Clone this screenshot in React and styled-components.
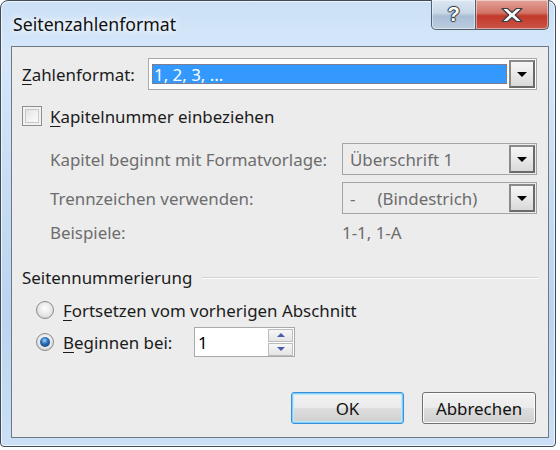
import React from 'react';
import styled, { createGlobalStyle } from 'styled-components';

const GlobalStyle = createGlobalStyle`
  body {
    margin: 0;
    background: #ffffff;
    font-family: "Noto Sans", "DejaVu Sans", sans-serif;
  }
`;

const Frame = styled.div`
  box-sizing: border-box;
  width: 556px;
  height: 447px;
  border: 1px solid #3e4b58;
  border-radius: 8px 8px 4px 4px;
  background: linear-gradient(180deg, #cbe0f6 0%, #d6e8fa 12%, #c8ddf4 40%, #bcd4ef 70%, #cbe0f6 100%);
  box-shadow: inset 0 0 0 1px rgba(255, 255, 255, 0.7);
  display: flex;
  flex-direction: column;
  padding: 0 6px 8px 10px;
`;

const TitleBar = styled.div`
  height: 45px;
  display: flex;
  align-items: flex-start;
  justify-content: space-between;
`;

const Title = styled.div`
  font-size: 17.7px;
  color: #111;
  padding: 11px 0 0 2px;
  text-shadow: 0 0 6px #ffffff, 0 0 10px #ffffff;
`;

const Caption = styled.div`
  display: flex;
  margin-top: -1px;
`;

const CaptionButton = styled.div`
  width: ${(p) => p.$w}px;
  height: 30px;
  box-sizing: border-box;
  border: 1px solid #54606c;
  border-top: none;
  border-radius: ${(p) => (p.$close ? '0 0 5px 0' : '0 0 0 5px')};
  border-left: ${(p) => (p.$close ? 'none' : '1px solid #54606c')};
  background: ${(p) =>
    p.$close
      ? 'linear-gradient(180deg, #e2a298 0%, #d27265 45%, #c2392a 55%, #cb5446 100%)'
      : 'linear-gradient(180deg, #dbe6f2 0%, #c9d7e6 45%, #a9bed6 55%, #bccde0 100%)'};
  box-shadow: inset 0 0 0 1px rgba(255, 255, 255, 0.45);
  display: flex;
  align-items: center;
  justify-content: center;
  color: #ffffff;
  font-family: "Liberation Sans", sans-serif;
  font-weight: bold;
  font-size: 20px;
  text-shadow: 0 0 1px #2d3640, 1px 0 1px #2d3640, -1px 0 1px #2d3640, 0 1px 1px #2d3640, 0 -1px 1px #2d3640;
`;

const Client = styled.div`
  flex: 1;
  border: 1px solid #6c7a88;
  background: #ececec;
  padding: 11px 10px 0 10px;
  display: flex;
  flex-direction: column;
  font-size: 16.9px;
  color: #1b1b1b;
`;

const Row = styled.div`
  display: flex;
  align-items: center;
  height: ${(p) => p.$h}px;
  margin-top: ${(p) => p.$mt || 0}px;
  padding-left: ${(p) => p.$indent || 0}px;
  gap: ${(p) => p.$gap || 0}px;
`;

const Label = styled.span`
  width: ${(p) => (p.$w ? `${p.$w}px` : 'auto')};
  flex-shrink: 0;
  color: ${(p) => (p.$disabled ? '#6d6d6d' : '#1b1b1b')};
  white-space: nowrap;
`;

const Key = styled.span`
  text-decoration: underline;
  text-underline-offset: 3px;
`;

const SelectBox = styled.div`
  box-sizing: border-box;
  width: ${(p) => p.$w}px;
  height: 32px;
  border: 1px solid ${(p) => (p.$disabled ? '#a4a4a4' : '#a9a9a9')};
  background: ${(p) => (p.$disabled ? '#ececec' : '#ffffff')};
  display: flex;
  align-items: center;
  padding: 0 1px 0 3px;
  gap: 2px;
`;

const Field = styled.div`
  flex: 1;
  height: 20px;
  display: flex;
  align-items: center;
  padding-left: ${(p) => (p.$selected ? 2 : 4)}px;
  color: ${(p) => (p.$selected ? '#ffffff' : '#6d6d6d')};
  background: ${(p) => (p.$selected ? '#3399ff' : 'transparent')};
  outline: ${(p) => (p.$selected ? '1px dotted #c8642a' : 'none')};
  outline-offset: -1px;
  white-space: pre;
`;

const DropButton = styled.div`
  box-sizing: border-box;
  width: 26px;
  height: 28px;
  border: 2px solid #6a6a6a;
  border-top-color: #8a8a8a;
  border-left-color: #8a8a8a;
  background: linear-gradient(180deg, #f6f6f6 0%, #e9e9e9 50%, #d9d9d9 100%);
  display: flex;
  align-items: center;
  justify-content: center;

  &::after {
    content: '';
    border-left: 5px solid transparent;
    border-right: 5px solid transparent;
    border-top: 5px solid #000;
    margin-top: 1px;
  }
`;

const CheckBox = styled.div`
  box-sizing: border-box;
  width: 20px;
  height: 20px;
  border: 1px solid #8e8f8f;
  background: linear-gradient(135deg, #dcdcdc 0%, #f4f4f4 60%, #ffffff 100%);
  box-shadow: inset 0 0 0 2px #f2f2f2, inset 0 0 0 3px #c8c8c8;
  flex-shrink: 0;
`;

const Radio = styled.div`
  box-sizing: border-box;
  width: 18px;
  height: 18px;
  border-radius: 50%;
  border: 1px solid #8a8a8a;
  background: radial-gradient(circle at 50% 40%, #ffffff 0%, #e6e6e6 55%, #c9c9c9 100%);
  display: flex;
  align-items: center;
  justify-content: center;
  flex-shrink: 0;

  &::after {
    content: '';
    display: ${(p) => (p.$checked ? 'block' : 'none')};
    width: 10px;
    height: 10px;
    border-radius: 50%;
    background: radial-gradient(circle at 45% 35%, #9ad6ff 0%, #2a6fb8 40%, #0d2f5c 100%);
  }
`;

const GroupLine = styled.div`
  flex: 1;
  height: 1px;
  margin: 0 0 0 10px;
  background: #d3d3d3;
  box-shadow: 0 1px 0 #ffffff;
`;

const Spin = styled.div`
  box-sizing: border-box;
  width: 101px;
  height: 30px;
  border: 1px solid #a9a9a9;
  background: #ffffff;
  display: flex;
  align-items: center;
  padding: 0 1px 0 3px;
`;

const SpinValue = styled.div`
  flex: 1;
  color: #000;
`;

const SpinButtons = styled.div`
  display: flex;
  flex-direction: column;
  gap: 1px;
`;

const SpinArrow = styled.div`
  box-sizing: border-box;
  width: 25px;
  height: 13px;
  border: 1px solid #bcbcbc;
  background: linear-gradient(180deg, #f7f7f7 0%, #e4e4e4 100%);
  display: flex;
  align-items: center;
  justify-content: center;

  &::after {
    content: '';
    border-left: 4px solid transparent;
    border-right: 4px solid transparent;
    ${(p) => (p.$down ? 'border-top: 4px solid #4b5cae;' : 'border-bottom: 4px solid #4b5cae;')}
  }
`;

const Buttons = styled.div`
  display: flex;
  justify-content: flex-end;
  gap: 18px;
  margin-top: 35px;
  padding-right: 2px;
`;

const Button = styled.div`
  box-sizing: border-box;
  width: ${(p) => p.$w}px;
  height: 32px;
  border-radius: 3px;
  border: 1px solid ${(p) => (p.$default ? '#3c8fd6' : '#707070')};
  background: linear-gradient(180deg, #f3f3f3 0%, #ebebeb 48%, #dddddd 52%, #cfcfcf 100%);
  box-shadow: ${(p) => (p.$default ? 'inset 0 0 0 1px #7fd0f7, inset 0 0 0 2px #bde8fb' : 'inset 0 0 0 1px #fbfbfb')};
  display: flex;
  align-items: center;
  justify-content: center;
  color: #111;
`;

function CloseGlyph() {
  return (
    <svg width="24" height="16" viewBox="0 0 24 16">
      <path
        d="M2 1.5 H7.5 L12 5.5 L16.5 1.5 H22 L15.2 8 L22 14.5 H16.5 L12 10.5 L7.5 14.5 H2 L8.8 8 Z"
        fill="#ffffff"
        stroke="#3a3f46"
        strokeWidth="1.2"
        strokeLinejoin="round"
      />
    </svg>
  );
}

export default function App() {
  return (
    <>
      <GlobalStyle />
      <Frame>
        <TitleBar>
          <Title>Seitenzahlenformat</Title>
          <Caption>
            <CaptionButton $w={45}>?</CaptionButton>
            <CaptionButton $w={73} $close>
              <CloseGlyph />
            </CaptionButton>
          </Caption>
        </TitleBar>
        <Client>
          <Row $h={32}>
            <Label $w={126}>
              <Key>Z</Key>ahlenformat:
            </Label>
            <SelectBox $w={389}>
              <Field $selected>1, 2, 3, ...</Field>
              <DropButton />
            </SelectBox>
          </Row>

          <Row $h={24} $mt={14} $gap={8}>
            <CheckBox />
            <Label>
              <Key>K</Key>apitelnummer einbeziehen
            </Label>
          </Row>

          <Row $h={32} $mt={15} $indent={28}>
            <Label $w={292} $disabled>Kapitel beginnt mit Formatvorlage:</Label>
            <SelectBox $w={195} $disabled>
              <Field>Überschrift 1</Field>
              <DropButton />
            </SelectBox>
          </Row>

          <Row $h={32} $mt={7} $indent={28}>
            <Label $w={292} $disabled>Trennzeichen verwenden:</Label>
            <SelectBox $w={195} $disabled>
              <Field>{'-     (Bindestrich)'}</Field>
              <DropButton />
            </SelectBox>
          </Row>

          <Row $h={32} $mt={2} $indent={28}>
            <Label $w={292} $disabled>Beispiele:</Label>
            <Label $disabled>1-1, 1-A</Label>
          </Row>

          <Row $h={24} $mt={17}>
            <Label>Seitennummerierung</Label>
            <GroupLine />
          </Row>

          <Row $h={24} $mt={9} $indent={14} $gap={9}>
            <Radio />
            <Label>
              <Key>F</Key>ortsetzen vom vorherigen Abschnitt
            </Label>
          </Row>

          <Row $h={30} $mt={5} $indent={14} $gap={9}>
            <Radio $checked />
            <Label $w={122}>
              <Key>B</Key>eginnen bei:
            </Label>
            <Spin>
              <SpinValue>1</SpinValue>
              <SpinButtons>
                <SpinArrow />
                <SpinArrow $down />
              </SpinButtons>
            </Spin>
          </Row>

          <Buttons>
            <Button $w={113} $default>OK</Button>
            <Button $w={114}>Abbrechen</Button>
          </Buttons>
        </Client>
      </Frame>
    </>
  );
}
